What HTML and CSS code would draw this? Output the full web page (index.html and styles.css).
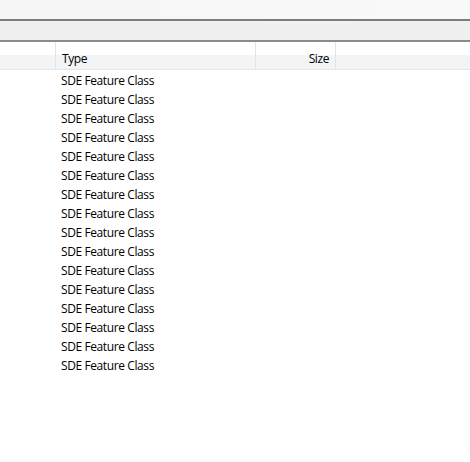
FILE: index.html
```html
<!DOCTYPE html>
<html lang="en">
<head>
    <meta charset="UTF-8">
    <title>Catalog Contents</title>
    <link rel="stylesheet" href="styles.css">
</head>
<body>
    <div class="toolbar"></div>
    <div class="location-bar"></div>
    <div class="list-view">
        <div class="list-header">
            <div class="col col-name"></div>
            <div class="col col-type">Type</div>
            <div class="col col-size">Size</div>
            <div class="col col-rest"></div>
        </div>
        <div class="list-rows" id="rows"></div>
    </div>

    <script>
        const rows = document.getElementById('rows');
        for (let i = 0; i < 16; i++) {
            const row = document.createElement('div');
            row.className = 'row';
            row.innerHTML = '<div class="cell cell-name"></div><div class="cell cell-type">SDE Feature Class</div>';
            rows.appendChild(row);
        }
    </script>
</body>
</html>
```

FILE: styles.css
```css
body {
    margin: 0;
    width: 470px;
    height: 462px;
    overflow: hidden;
    background: #fff;
    font-family: "Segoe UI", "Open Sans", "Noto Sans", sans-serif;
    font-size: 12px;
    letter-spacing: -0.4px;
    color: #000;
}
.toolbar {
    height: 19px;
    background: linear-gradient(to right, #f6f6f6, #f9f9f9);
    border-bottom: 2px solid #7d7d7d;
}
.location-bar {
    height: 19px;
    background: #f0f0f0;
    border-bottom: 2px solid #8a8a8a;
}
.list-header {
    display: flex;
    height: 27px;
    background: linear-gradient(to bottom, #fff 0, #fff 50%, #f3f4f6 50%, #f3f4f6 100%);
    border-bottom: 1px solid #e4e5e8;
}
.col {
    box-sizing: border-box;
    padding: 6px 6px 0;
    line-height: 21px;
    border-right: 1px solid #e3e4e7;
}
.col-name { width: 56px; }
.col-type { width: 200px; }
.col-size {
    width: 80px;
    text-align: right;
    padding-right: 6px;
}
.col-rest {
    flex: 1;
    border-right: none;
}
.list-rows {
    padding-top: 1px;
}
.row {
    display: flex;
    height: 19px;
    line-height: 19px;
}
.cell-name { width: 56px; }
.cell-type {
    padding-left: 5px;
}
```
